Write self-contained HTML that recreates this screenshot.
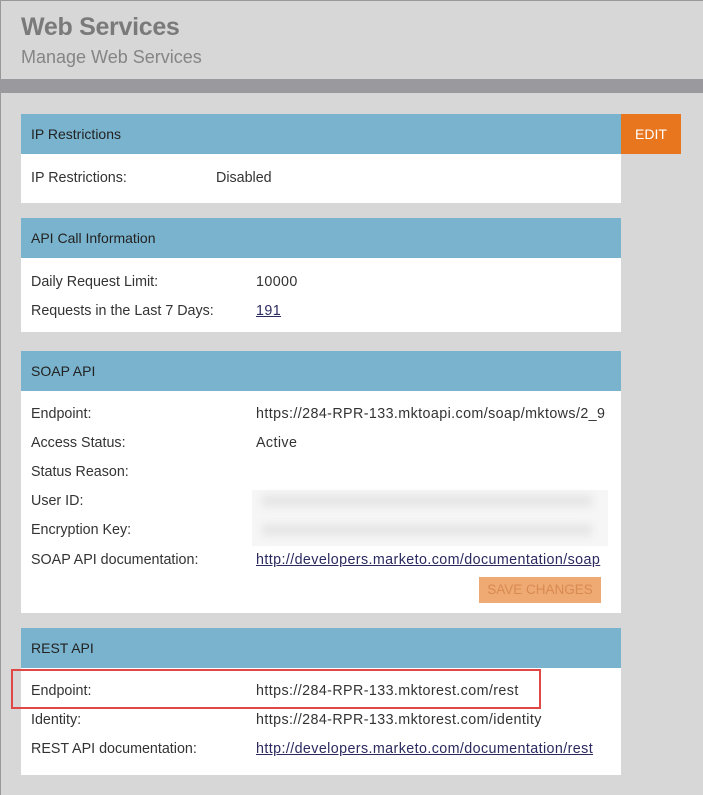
<!DOCTYPE html><html><head><style>
body{margin:0;width:703px;height:795px;background:#d7d7d7;font-family:"Liberation Sans",sans-serif;position:relative;overflow:hidden;color:#333}
.a{position:absolute}
.h{position:absolute;left:21px;width:600px;height:40px;background:#79b3cd;font-size:14px;line-height:40px;text-indent:10px;color:#222}
.b{position:absolute;left:21px;width:600px;background:#fff}
.t{position:absolute;font-size:14.3px;white-space:nowrap;line-height:16px;color:#333}
.v{letter-spacing:0.4px}
a{color:#2a2a60;text-decoration:underline}
.blur{position:absolute;background:#e6e6e6;filter:blur(4px)}
</style></head><body>
<div class="a" style="left:0;top:0;width:703px;height:1px;background:#999"></div>
<div class="a" style="left:0;top:0;width:1px;height:795px;background:#999"></div>
<div class="a" style="left:21px;top:13px;font-size:25px;font-weight:bold;color:#7a7a7a;letter-spacing:-0.3px">Web Services</div>
<div class="a" style="left:21px;top:47px;font-size:18px;color:#858585">Manage Web Services</div>
<div class="a" style="left:0;top:79px;width:703px;height:14px;background:#9a999e"></div>

<div class="h" style="top:114px">IP Restrictions</div>
<div class="a" style="left:621px;top:114px;width:60px;height:40px;background:#e8761e;color:#fff;font-size:14px;line-height:40px;text-align:center">EDIT</div>
<div class="b" style="top:154px;height:49px"></div>
<div class="t" style="left:31px;top:170px">IP Restrictions:</div><div class="t" style="left:216px;top:170px">Disabled</div>

<div class="h" style="top:218px">API Call Information</div>
<div class="b" style="top:258px;height:74px"></div>
<div class="t" style="left:31px;top:274px">Daily Request Limit:</div><div class="t v" style="left:256px;top:274px">10000</div>
<div class="t" style="left:31px;top:303px">Requests in the Last 7 Days:</div><div class="t v" style="left:256px;top:303px"><a>191</a></div>

<div class="h" style="top:351px">SOAP API</div>
<div class="b" style="top:391px;height:222px"></div>
<div class="t" style="left:31px;top:406px">Endpoint:</div><div class="t v" style="left:256px;top:406px">https://284-RPR-133.mktoapi.com/soap/mktows/2_9</div>
<div class="t" style="left:31px;top:435px">Access Status:</div><div class="t v" style="left:256px;top:435px">Active</div>
<div class="t" style="left:31px;top:464px">Status Reason:</div>
<div class="t" style="left:31px;top:493px">User ID:</div>
<div class="t" style="left:31px;top:522px">Encryption Key:</div>
<div class="a" style="left:252px;top:490px;width:356px;height:56px;background:#f6f6f6"></div>
<div class="blur" style="left:262px;top:495px;width:330px;height:12px"></div>
<div class="blur" style="left:262px;top:524px;width:330px;height:12px"></div>
<div class="t" style="left:31px;top:552px">SOAP API documentation:</div><div class="t v" style="left:256px;top:552px"><a>http://developers.marketo.com/documentation/soap</a></div>
<div class="a" style="left:479px;top:577px;width:122px;height:26px;background:#efaa74;color:#d88a50;font-size:13.5px;line-height:26px;text-align:center">SAVE CHANGES</div>

<div class="h" style="top:628px">REST API</div>
<div class="b" style="top:668px;height:107px"></div>
<div class="t" style="left:31px;top:683px">Endpoint:</div><div class="t v" style="left:256px;top:683px">https://284-RPR-133.mktorest.com/rest</div>
<div class="t" style="left:31px;top:712px">Identity:</div><div class="t v" style="left:256px;top:712px">https://284-RPR-133.mktorest.com/identity</div>
<div class="t" style="left:31px;top:741px">REST API documentation:</div><div class="t v" style="left:256px;top:741px"><a>http://developers.marketo.com/documentation/rest</a></div>
<div class="a" style="left:11px;top:669px;width:526px;height:36px;border:2px solid #e04848"></div>
</body></html>
